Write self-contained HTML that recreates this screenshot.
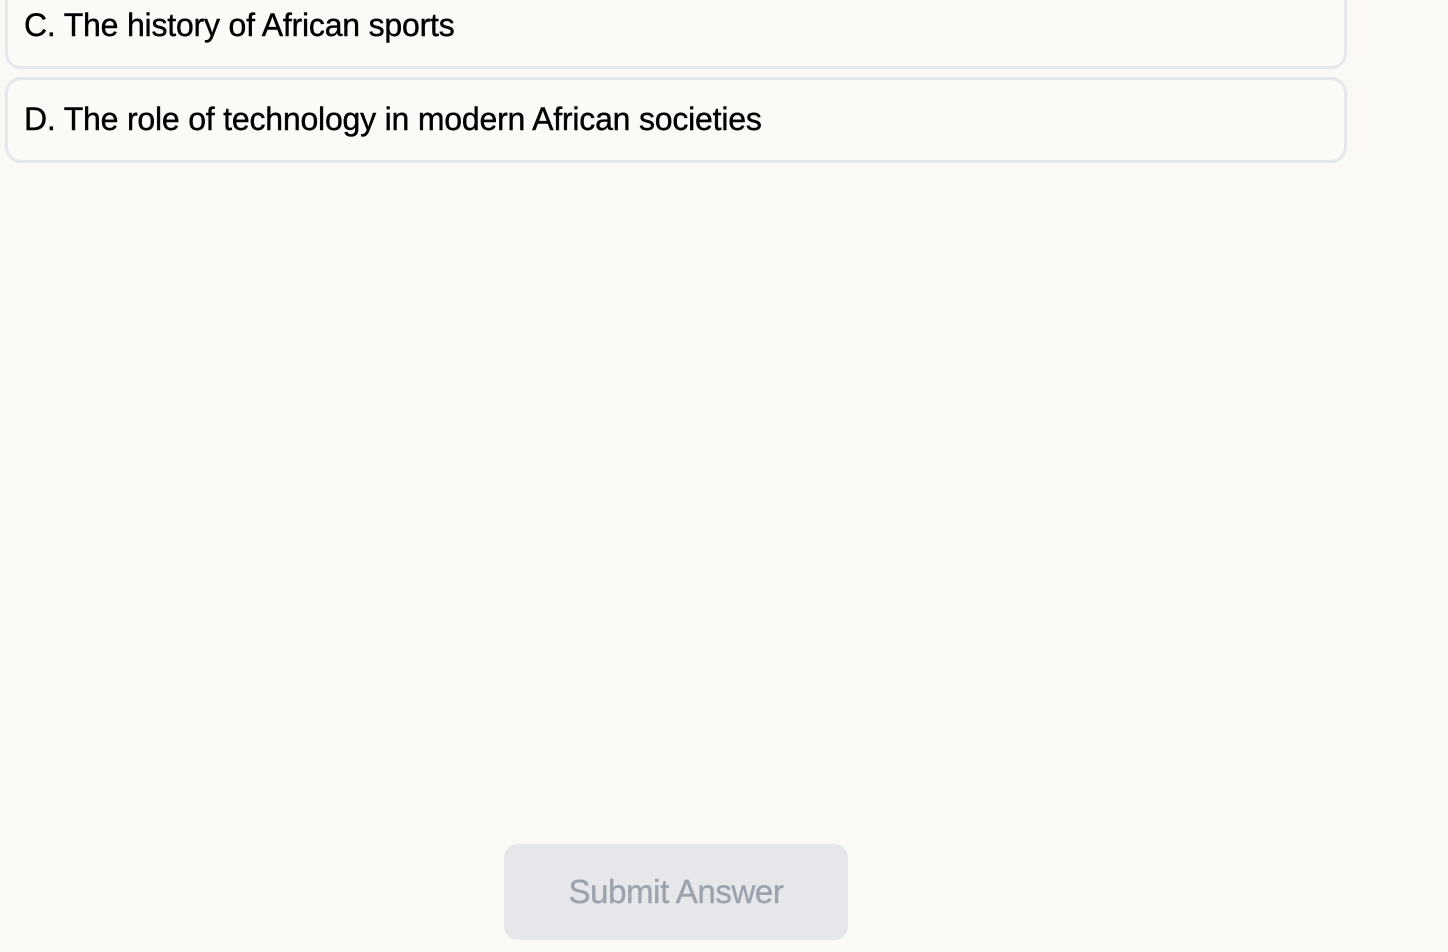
<!DOCTYPE html>
<html><head><style>
html,body{margin:0;padding:0;width:1448px;height:952px;overflow:hidden;background:#faf9f6;font-family:"Liberation Sans",sans-serif;}
.card{position:absolute;left:5px;width:1336px;border:3px solid #e5e7eb;border-radius:16px;background:#fbfaf7;box-sizing:content-box;}
.t{position:absolute;left:16px;font-size:32px;color:#000;letter-spacing:-0.2px;white-space:nowrap;-webkit-text-stroke:0.4px #000;}
.btn{position:absolute;left:504px;top:844px;width:344px;height:96px;background:#e5e7eb;border-radius:14px;color:#9ca3af;font-size:33px;letter-spacing:-0.4px;text-align:center;line-height:96px;-webkit-text-stroke:0.4px #9ca3af;}
</style></head><body>
<div class="card" style="top:-30px;height:93px;"><div class="t" style="top:34px">C. The history of African sports</div></div>
<div class="card" style="top:77px;height:80px;"><div class="t" style="top:21px">D. The role of technology in modern African societies</div></div>
<div class="btn">Submit Answer</div>
</body></html>
